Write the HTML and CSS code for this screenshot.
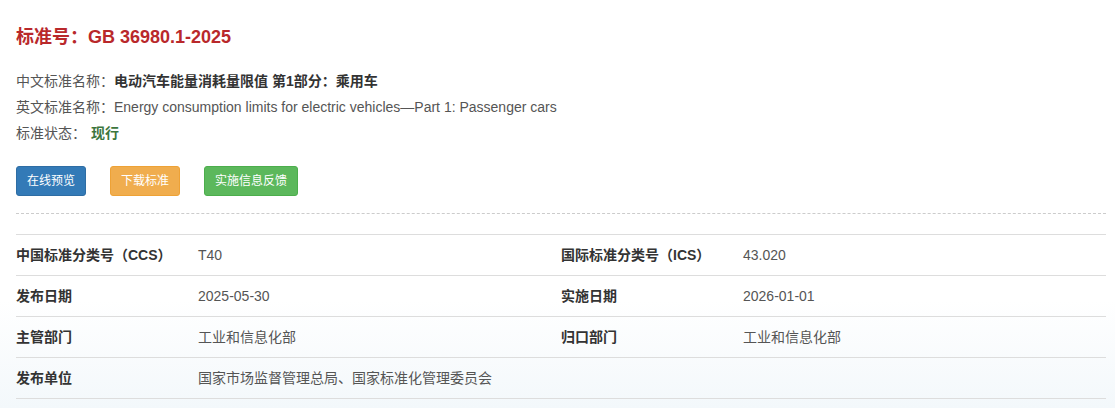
FILE: index.html
```html
<!DOCTYPE html>
<html lang="zh-CN">
<head>
<meta charset="utf-8">
<title>GB 36980.1-2025</title>
<link rel="stylesheet" href="styles.css">
</head>
<body>
<div class="page">
  <h1 class="title">标准号：GB 36980.1-2025</h1>
  <div class="info">
    <div class="info-line"><span class="label">中文标准名称：</span><span class="value">电动汽车能量消耗量限值 第1部分：乘用车</span></div>
    <div class="info-line"><span class="label">英文标准名称：</span><span class="value-plain">Energy consumption limits for electric vehicles—Part 1: Passenger cars</span></div>
    <div class="info-line"><span class="label">标准状态：</span><span class="status">现行</span></div>
  </div>
  <div class="actions">
    <a class="btn btn-blue">在线预览</a>
    <a class="btn btn-orange">下载标准</a>
    <a class="btn btn-green">实施信息反馈</a>
  </div>
  <div class="divider"></div>
  <div class="table">
    <div class="row">
      <div class="cell key">中国标准分类号（CCS）</div>
      <div class="cell val">T40</div>
      <div class="cell key">国际标准分类号（ICS）</div>
      <div class="cell val">43.020</div>
    </div>
    <div class="row">
      <div class="cell key">发布日期</div>
      <div class="cell val">2025-05-30</div>
      <div class="cell key">实施日期</div>
      <div class="cell val">2026-01-01</div>
    </div>
    <div class="row">
      <div class="cell key">主管部门</div>
      <div class="cell val">工业和信息化部</div>
      <div class="cell key">归口部门</div>
      <div class="cell val">工业和信息化部</div>
    </div>
    <div class="row">
      <div class="cell key">发布单位</div>
      <div class="cell val wide">国家市场监督管理总局、国家标准化管理委员会</div>
      <div class="cell key"></div>
      <div class="cell val"></div>
    </div>
  </div>
</div>
</body>
</html>
```

FILE: styles.css
```css
html, body {
  margin: 0;
  padding: 0;
}
body {
  font-family: "Liberation Sans", Arial, "Noto Sans CJK SC", sans-serif;
  font-size: 14px;
  color: #333;
  background: linear-gradient(to bottom, #ffffff 0, #ffffff 300px, #f3f8fb 408px);
  min-height: 408px;
}
.page {
  width: 1090px;
  padding: 25px 0 0 16px;
}
.title {
  margin: 0;
  font-size: 18px;
  line-height: 24px;
  font-weight: bold;
  color: #b9282b;
}
.info {
  margin-top: 19px;
}
.info-line {
  line-height: 26px;
  height: 26px;
  white-space: nowrap;
}
.label {
  color: #555;
}
.value {
  font-weight: bold;
  color: #333;
}
.value-plain {
  color: #555;
}
.status {
  margin-left: 5px;
  font-weight: bold;
  color: #3c763d;
}
.actions {
  margin-top: 20px;
  display: flex;
  gap: 24px;
}
.btn {
  display: inline-block;
  box-sizing: border-box;
  height: 30px;
  padding: 0 10px;
  line-height: 28px;
  font-size: 12px;
  color: #fff;
  border: 1px solid transparent;
  border-radius: 3px;
  text-decoration: none;
}
.btn-blue {
  background: #337ab7;
  border-color: #2e6da4;
}
.btn-orange {
  background: #f0ad4e;
  border-color: #eea236;
}
.btn-green {
  background: #5cb85c;
  border-color: #4cae4c;
}
.divider {
  margin-top: 17px;
  border-top: 1px dashed #ccc;
}
.table {
  margin-top: 20px;
  border-top: 1px solid #ddd;
}
.row {
  display: grid;
  grid-template-columns: 182px 363px 182px 363px;
  border-bottom: 1px solid #ddd;
  height: 40px;
  align-items: center;
}
.cell {
  line-height: 20px;
  white-space: nowrap;
}
.key {
  font-weight: bold;
  color: #333;
}
.val {
  color: #555;
}
```
